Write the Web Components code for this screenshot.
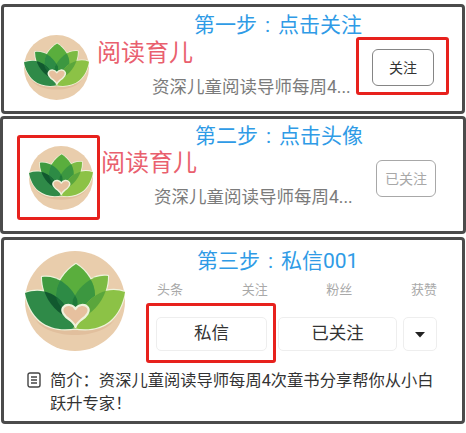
<!DOCTYPE html>
<html lang="zh"><head><meta charset="utf-8"><title>步骤</title>
<style>
html,body{margin:0;padding:0;background:#fff}
body{width:466px;height:433px;overflow:hidden;font-family:Roboto,"Noto Sans CJK SC",sans-serif;padding-top:4px;box-sizing:border-box;display:flex;flex-direction:column}
.c{display:inline-block;width:1em;text-align:center}
</style></head><body>
<template id="logo-t"><style>:host{display:block;width:var(--size,65px);height:var(--size,65px)}svg{display:block;width:100%;height:100%}</style>
<svg viewBox="0 0 100 100" aria-hidden="true">
<defs>
<path id="pm" d="M17 26C30 24 44 32 52 48C54 56 50 66 46 68C30 62 17 46 17 26Z"/>
<path id="pn" d="M83 25C70 23 56 32 48 48C46 56 50 66 54 68C70 62 83 46 83 25Z"/>
<path id="po" d="M0 42C13 37 28 40 38 52C42 60 46 70 52 77C38 80 25 78 15 70C7 63 2 53 0 42Z"/>
<path id="pr" d="M100 41C87 36 72 40 62 52C58 60 54 70 48 77C62 80 75 78 85 70C93 63 98 53 100 41Z"/>
<path id="pt" d="M51 13C62 20 70 32 70 44C70 54 60 62 51 68C42 62 31 54 31 44C31 32 40 20 51 13Z"/>
<clipPath id="co"><use href="#po"/></clipPath>
<clipPath id="cr"><use href="#pr"/></clipPath>
<clipPath id="cm"><use href="#pm"/></clipPath>
<clipPath id="ct"><use href="#pt"/></clipPath>
</defs>
<circle cx="50" cy="50" r="50" fill="#e9cdac"/>
<path d="M10 68C22 82 78 84 90 68C84 78 68 84 50 84C32 84 16 78 10 68Z" fill="#e1bf9d"/>
<g fill="#eef3dc" stroke="#eef3dc" stroke-width="2.4" stroke-linejoin="round">
<use href="#pm"/><use href="#pn"/><use href="#pt"/><use href="#po"/><use href="#pr"/>
</g>
<use href="#pm" fill="#3f9a40"/>
<use href="#pn" fill="#7dbb44"/>
<use href="#pt" fill="#5aae3d"/>
<use href="#pm" fill="#2d8b45" clip-path="url(#ct)"/>
<use href="#pn" fill="#3c9740" clip-path="url(#ct)"/>
<g clip-path="url(#ct)"><use href="#pn" fill="#1f7a3a" clip-path="url(#cm)"/></g>
<use href="#po" fill="#2f8a48"/>
<use href="#pr" fill="#8cc246"/>
<use href="#pm" fill="#11592f" clip-path="url(#co)"/>
<use href="#pt" fill="#1a6d38" clip-path="url(#co)"/>
<use href="#pn" fill="#5aa63c" clip-path="url(#cr)"/>
<path d="M50.500 58C53 53 60 53 62.500 56C66 60 61 66 56 69C53 71.500 51 74 50.500 76C50 74 48 71.500 45 69C40 66 35 60 38.500 56C41 53 48 53 50.500 58Z" fill="#e6c09e" stroke="#eef3dc" stroke-width="2.2" stroke-linejoin="round"/>
</svg></template>

<template id="card-t"><style>
:host{display:block;box-sizing:border-box;position:relative;border:3px solid #4b4b4b;border-radius:4px;background:#fff;height:var(--h);margin:var(--m,0);padding:var(--pt) var(--pr) 0 var(--pl)}
.g{display:grid;grid-template-columns:var(--av) 1fr auto;grid-template-rows:20px auto auto;column-gap:var(--gap)}
.t{grid-column:2/4;grid-row:1;margin-left:var(--tx);margin-top:-2px;height:20px;font-size:21px;line-height:24px;color:#2f9be6;white-space:nowrap}
.a{grid-column:1;grid-row:2/4}
.n{grid-column:2;grid-row:2;margin-top:var(--nt,3px);font-size:24px;line-height:30px;color:#e9606e;white-space:nowrap}
.d{grid-column:2/3;grid-row:3;margin-left:var(--dx,55px);margin-top:6px;font-size:17.5px;line-height:24px;color:#7b7b7b;white-space:nowrap}
.b{grid-column:3;grid-row:2/4;margin-top:var(--bt)}
</style><div class="g"><div class="t"><slot name="title"></slot></div><div class="a"><slot name="avatar"></slot></div><div class="n"><slot name="name"></slot></div><div class="d"><slot name="desc"></slot></div><div class="b"><slot name="action"></slot></div></div><slot name="mark"></slot></template>

<template id="btn-t"><style>
:host{display:flex;box-sizing:border-box;align-items:center;justify-content:center;width:var(--w);height:var(--bh);border:1.5px solid var(--bc);border-radius:var(--r,6px);color:var(--fc);font-size:var(--fs,14px);line-height:1;white-space:nowrap;background:#fff}
</style><slot></slot></template>

<template id="mark-t"><style>
:host{display:block;position:absolute;box-sizing:border-box;border:3px solid #e7211d;border-radius:3px;left:var(--x);top:var(--y);width:var(--w);height:var(--h)}
</style></template>

<template id="prof-t"><style>
:host{display:block;box-sizing:border-box;position:relative;border:3px solid #4b4b4b;border-radius:4px;background:#fff;height:187px;margin:3px 1px 0 1px;padding:11px 0 0 21px}
.top{display:flex;gap:31px}
.r{width:281px}
.t{margin:-2px 0 0 41px;font-size:21px;line-height:24px;color:#2f9be6;white-space:nowrap}
.s{display:flex;justify-content:space-between;margin-top:9px;padding-left:1px;font-size:13px;line-height:16px;color:#a9a9a9}
.bs{display:flex;margin-top:19px}
.bio{display:flex;margin:18px 0 0 2px}
.ic{flex:none;width:23px;padding-top:3px}
.tx{width:390px;font-size:16.3px;line-height:23px;color:#333}
</style><div class="top"><slot name="avatar"></slot><div class="r"><div class="t"><slot name="title"></slot></div><div class="s"><slot name="stat"></slot></div><div class="bs"><slot name="btn"></slot></div></div></div><div class="bio"><div class="ic"><slot name="icon"></slot></div><div class="tx"><slot name="bio"></slot></div></div><slot name="mark"></slot></template>

<follow-card style="--h:110px;--m:0 1px 0 1px;--pt:8px;--pr:28px;--pl:20px;--av:65px;--gap:8px;--tx:97px;--bt:14px">
  <span slot="title">第一步<span class="c">:</span>点击关注</span>
  <lotus-logo slot="avatar"></lotus-logo>
  <span slot="name">阅读育儿</span>
  <span slot="desc">资深儿童阅读导师每周4...</span>
  <ui-btn slot="action" style="--w:62px;--bh:37px;--bc:#858585;--fc:#333">关注</ui-btn>
  <focus-mark slot="mark" style="--x:352px;--y:30px;--w:93px;--h:58px"></focus-mark>
</follow-card>
<follow-card style="--h:118px;--m:2px 0 0 0;--pt:7px;--pr:27px;--pl:26px;--av:64px;--gap:8px;--tx:94px;--bt:14px;--nt:2px;--dx:53px">
  <span slot="title">第二步<span class="c">:</span>点击头像</span>
  <lotus-logo slot="avatar" style="--size:64px"></lotus-logo>
  <span slot="name">阅读育儿</span>
  <span slot="desc">资深儿童阅读导师每周4...</span>
  <ui-btn slot="action" style="--w:60px;--bh:37px;--bc:#a8a8a8;--fc:#a8a8a8">已关注</ui-btn>
  <focus-mark slot="mark" style="--x:14px;--y:16px;--w:83px;--h:85px"></focus-mark>
</follow-card>
<profile-card>
  <lotus-logo slot="avatar" style="--size:100px;flex:none"></lotus-logo>
  <span slot="title">第三步<span class="c">:</span>私信001</span>
  <span slot="stat">头条</span><span slot="stat">关注</span><span slot="stat">粉丝</span><span slot="stat">获赞</span>
  <ui-btn slot="btn" style="--w:111px;--bh:34px;--bc:#eeeeee;--fc:#333;--fs:17.5px;--r:5px">私信</ui-btn>
  <ui-btn slot="btn" style="--w:119px;--bh:34px;--bc:#eeeeee;--fc:#333;--fs:17.5px;--r:5px;margin-left:11px">已关注</ui-btn>
  <ui-btn slot="btn" style="--w:34px;--bh:34px;--bc:#eeeeee;--fc:#222;--r:5px;margin-left:6px"><svg width="12" height="7" viewBox="0 0 12 7"><path d="M1 1H11L6 6.5Z" fill="#222"/></svg></ui-btn>
  <svg slot="icon" width="14" height="16" viewBox="0 0 14 16" fill="none" stroke="#444" stroke-width="1.4"><rect x="1" y="1" width="12" height="14" rx="2"/><path d="M4 5H10M4 8H10M4 11H10"/></svg>
  <span slot="bio">简介：资深儿童阅读导师每周4次童书分享帮你从小白跃升专家！</span>
  <focus-mark slot="mark" style="--x:142px;--y:63px;--w:130px;--h:60px"></focus-mark>
</profile-card>
<script>
function reg(name,tid){customElements.define(name,class extends HTMLElement{constructor(){super();this.attachShadow({mode:"open"}).appendChild(document.getElementById(tid).content.cloneNode(true));}});}
reg("lotus-logo","logo-t");reg("follow-card","card-t");reg("ui-btn","btn-t");reg("focus-mark","mark-t");reg("profile-card","prof-t");
</script>
</body></html>
